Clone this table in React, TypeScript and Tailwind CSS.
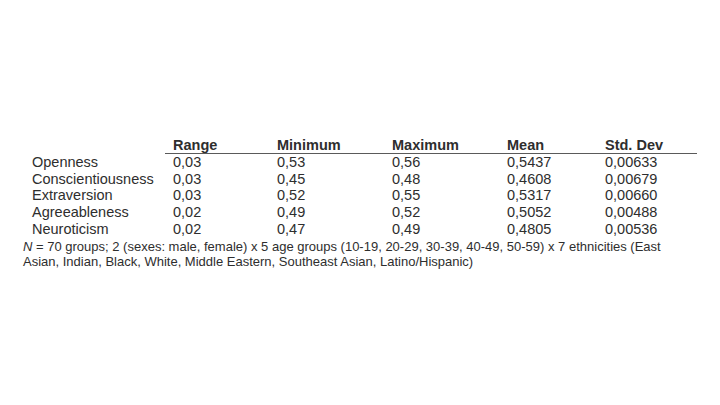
const rows = [
  ['Openness', '0,03', '0,53', '0,56', '0,5437', '0,00633'],
  ['Conscientiousness', '0,03', '0,45', '0,48', '0,4608', '0,00679'],
  ['Extraversion', '0,03', '0,52', '0,55', '0,5317', '0,00660'],
  ['Agreeableness', '0,02', '0,49', '0,52', '0,5052', '0,00488'],
  ['Neuroticism', '0,02', '0,47', '0,49', '0,4805', '0,00536'],
]

const headers = ['Range', 'Minimum', 'Maximum', 'Mean', 'Std. Dev']

const cols = 'grid grid-cols-[141px_104px_115px_115px_98px_100px]'

export default function App() {
  return (
    <div
      className="w-[720px] h-[405px] bg-white text-[#2e2e2e] overflow-hidden"
      style={{ fontFamily: '"Liberation Sans", Arial, sans-serif' }}
    >
      <div className="pt-[138px] pl-[24px]">
        {/* header */}
        <div className={`${cols} text-[14.5px] leading-[15px]`}>
          <div />
          {headers.map(h => (
            <div key={h} className="pl-2 font-bold border-b border-[#5a5a5a]">
              {h}
            </div>
          ))}
        </div>

        {/* body */}
        {rows.map(r => (
          <div key={r[0]} className={`${cols} text-[14.5px] leading-[16.7px]`}>
            {r.map((c, i) => (
              <div key={i} className="pl-2">
                {c}
              </div>
            ))}
          </div>
        ))}

        {/* note */}
        <p className="mt-px -ml-px text-[13px] leading-[15.5px] w-[670px]">
          <i>N</i> = 70 groups; 2 (sexes: male, female) x 5 age groups (10-19,
          20-29, 30-39, 40-49, 50-59) x 7 ethnicities (East Asian, Indian,
          Black, White, Middle Eastern, Southeast Asian, Latino/Hispanic)
        </p>
      </div>
    </div>
  )
}
